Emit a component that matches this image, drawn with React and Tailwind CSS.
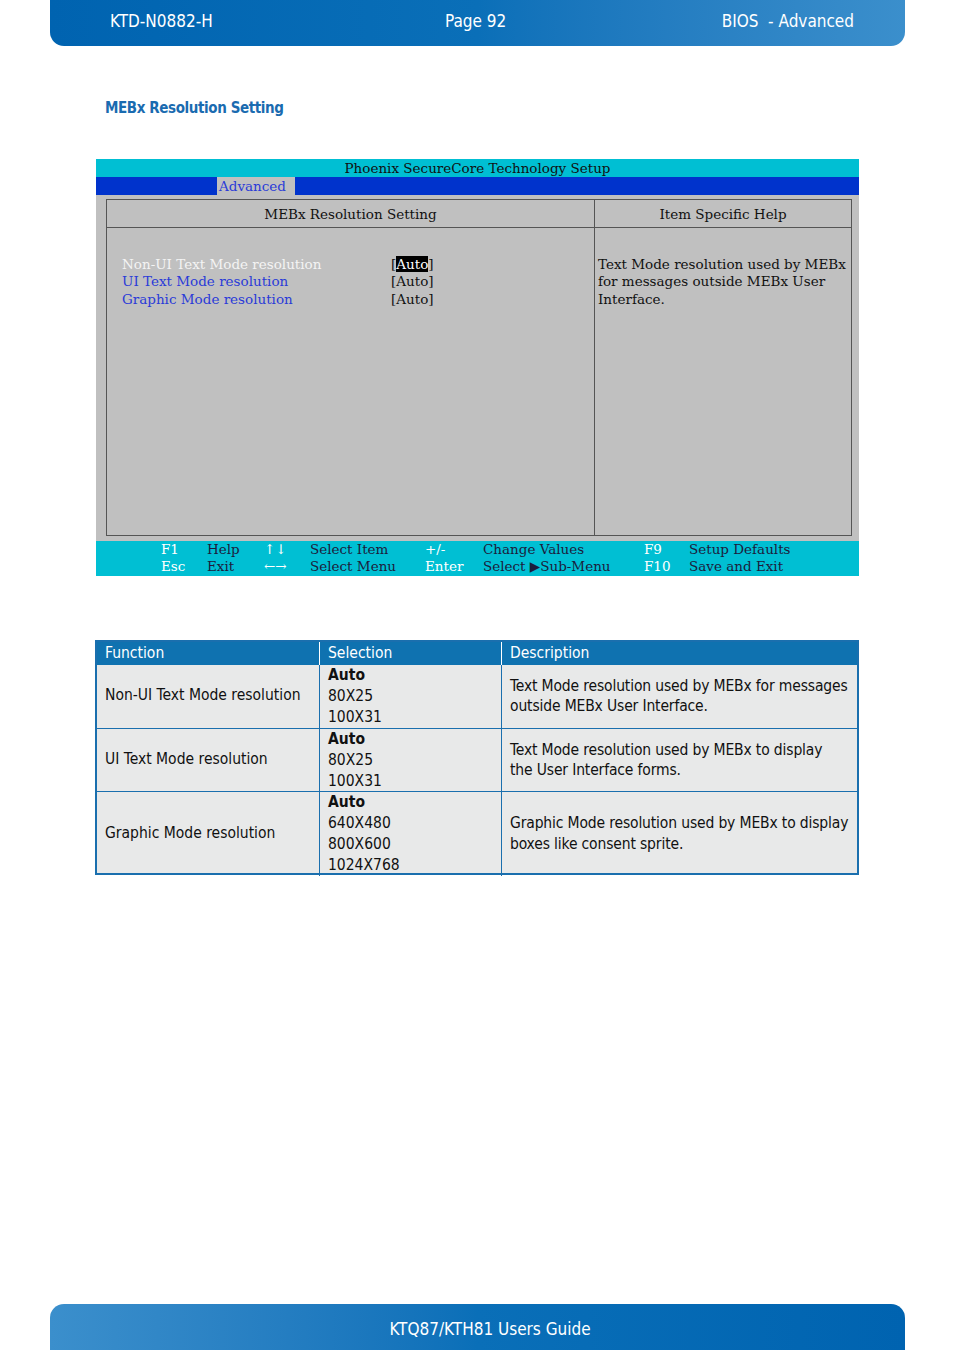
import React from 'react'

const docFont = { fontFamily: '"DejaVu Sans Condensed", "DejaVu Sans", sans-serif' }
const biosFont = { fontFamily: '"DejaVu Serif", serif' }

const rows = [
    {
        fn: 'Non-UI Text Mode resolution',
        sel: ['80X25', '100X31'],
        desc: ['Text Mode resolution used by MEBx for messages', 'outside MEBx User Interface.'],
        h: 'h-[63px]',
    },
    {
        fn: 'UI Text Mode resolution',
        sel: ['80X25', '100X31'],
        desc: ['Text Mode resolution used by MEBx to display', 'the User Interface forms.'],
        h: 'h-[63px]',
    },
    {
        fn: 'Graphic Mode resolution',
        sel: ['640X480', '800X600', '1024X768'],
        desc: ['Graphic Mode resolution used by MEBx to display', 'boxes like consent sprite.'],
        h: 'h-[82px]',
    },
]

function BiosScreen() {
    return (
        <div className="mx-[96px] mt-[39px] w-[763px] text-[13.5px] leading-[18px]" style={biosFont}>
            {/* title bars */}
            <div className="h-[18px] bg-[#00bfd3] text-center text-[#111]">Phoenix SecureCore Technology Setup</div>
            <div className="h-[18px] bg-[#0033cc] pl-[121px]">
                <span className="inline-block h-[18px] w-[78px] bg-[#c0c0c0] pl-[2px] text-[#2a3bd8]">Advanced</span>
            </div>

            {/* main panel */}
            <div className="h-[346px] bg-[#c0c0c0] pl-[10px] pr-[7px] pt-[4px]">
                <div className="flex h-[337px] border border-[#555]">
                    <div className="flex w-[488px] flex-col border-r border-[#555]">
                        <div className="h-[28px] border-b border-[#555] pt-[5px] text-center text-[#111]">MEBx Resolution Setting</div>
                        <div className="grid grid-cols-[269px_1fr] pl-[15px] pt-[28px] leading-[17.7px]">
                            <span className="text-[#f4f4f4]">Non-UI Text Mode resolution</span>
                            <span className="text-[#111]">
                                [<span className="bg-black text-white">Auto</span>]
                            </span>
                            <span className="text-[#2a3bd8]">UI Text Mode resolution</span>
                            <span className="text-[#111]">[Auto]</span>
                            <span className="text-[#2a3bd8]">Graphic Mode resolution</span>
                            <span className="text-[#111]">[Auto]</span>
                        </div>
                    </div>
                    <div className="flex flex-1 flex-col">
                        <div className="h-[28px] border-b border-[#555] pt-[5px] text-center text-[#111]">Item Specific Help</div>
                        <div className="pl-[3px] pt-[28px] leading-[17.7px] text-[#111]">
                            Text Mode resolution used by MEBx<br />
                            for messages outside MEBx User<br />
                            Interface.
                        </div>
                    </div>
                </div>
            </div>

            {/* key help bar */}
            <div className="grid h-[35px] grid-cols-[46px_57px_46px_115px_58px_161px_45px_1fr] bg-[#00bfd3] pl-[65px] leading-[17.5px]">
                <span className="text-white">F1</span>
                <span className="text-[#1c1c3c]">Help</span>
                <span className="text-white">↑↓</span>
                <span className="text-[#1c1c3c]">Select Item</span>
                <span className="text-white">+/-</span>
                <span className="text-[#1c1c3c]">Change Values</span>
                <span className="text-white">F9</span>
                <span className="text-[#1c1c3c]">Setup Defaults</span>
                <span className="text-white">Esc</span>
                <span className="text-[#1c1c3c]">Exit</span>
                <span className="text-white">←→</span>
                <span className="text-[#1c1c3c]">Select Menu</span>
                <span className="text-white">Enter</span>
                <span className="text-[#1c1c3c]">Select ▶Sub-Menu</span>
                <span className="text-white">F10</span>
                <span className="text-[#1c1c3c]">Save and Exit</span>
            </div>
        </div>
    )
}

export default function App() {
    return (
        <div className="relative h-[1350px] w-[954px] overflow-hidden bg-white" style={docFont}>
            {/* Header */}
            <div className="mx-[50px] flex h-[46px] w-[855px] items-center rounded-b-[14px] bg-gradient-to-r from-[#0063b0] via-[#0a6fb8] to-[#3b8fcc] pb-[3px] text-[17px] text-white">
                <span className="ml-[60px] w-[335px]">KTD-N0882-H</span>
                <span className="flex-1">Page 92</span>
                <span className="mr-[51px]">BIOS&nbsp; - Advanced</span>
            </div>

            <h2 className="ml-[105px] mt-[51px] text-[15px] font-bold tracking-[-0.4px] text-[#1a6bb0]">MEBx Resolution Setting</h2>

            <BiosScreen />

            {/* Table */}
            <div className="ml-[95px] mt-[64px] w-[764px] border-2 border-[#1a6fae] text-[15.5px] text-[#111]">
                <div className="grid h-[23px] grid-cols-[223px_182px_1fr] bg-[#0f72b0] leading-[23px] text-white">
                    <span className="border-r border-white pl-[8px]">Function</span>
                    <span className="border-r border-white pl-[8px]">Selection</span>
                    <span className="pl-[8px]">Description</span>
                </div>
                {rows.map((r, i) => (
                    <div key={i} className={`grid grid-cols-[223px_182px_1fr] bg-[#e8e9e9] ${r.h} ${i > 0 ? 'border-t border-[#1a6fae]' : ''}`}>
                        <div className="flex items-center border-r border-[#1a6fae] pl-[8px]">{r.fn}</div>
                        <div className="flex flex-col border-r border-[#1a6fae] pl-[8px] leading-[21px]">
                            <span className="font-bold">Auto</span>
                            {r.sel.map((s) => (
                                <span key={s}>{s}</span>
                            ))}
                        </div>
                        <div className="flex flex-col justify-center pl-[8px] leading-[20.5px] tracking-[-0.15px]">
                            {r.desc.map((d) => (
                                <span key={d}>{d}</span>
                            ))}
                        </div>
                    </div>
                ))}
            </div>

            {/* Footer */}
            <div className="absolute bottom-0 left-[50px] flex h-[46px] w-[855px] items-center justify-center rounded-t-[14px] bg-gradient-to-r from-[#3b8fcc] via-[#0a6fb8] to-[#0063b0] pt-[6px] text-[17px] text-white">
                <span className="ml-[25px]">KTQ87/KTH81 Users Guide</span>
            </div>
        </div>
    )
}
